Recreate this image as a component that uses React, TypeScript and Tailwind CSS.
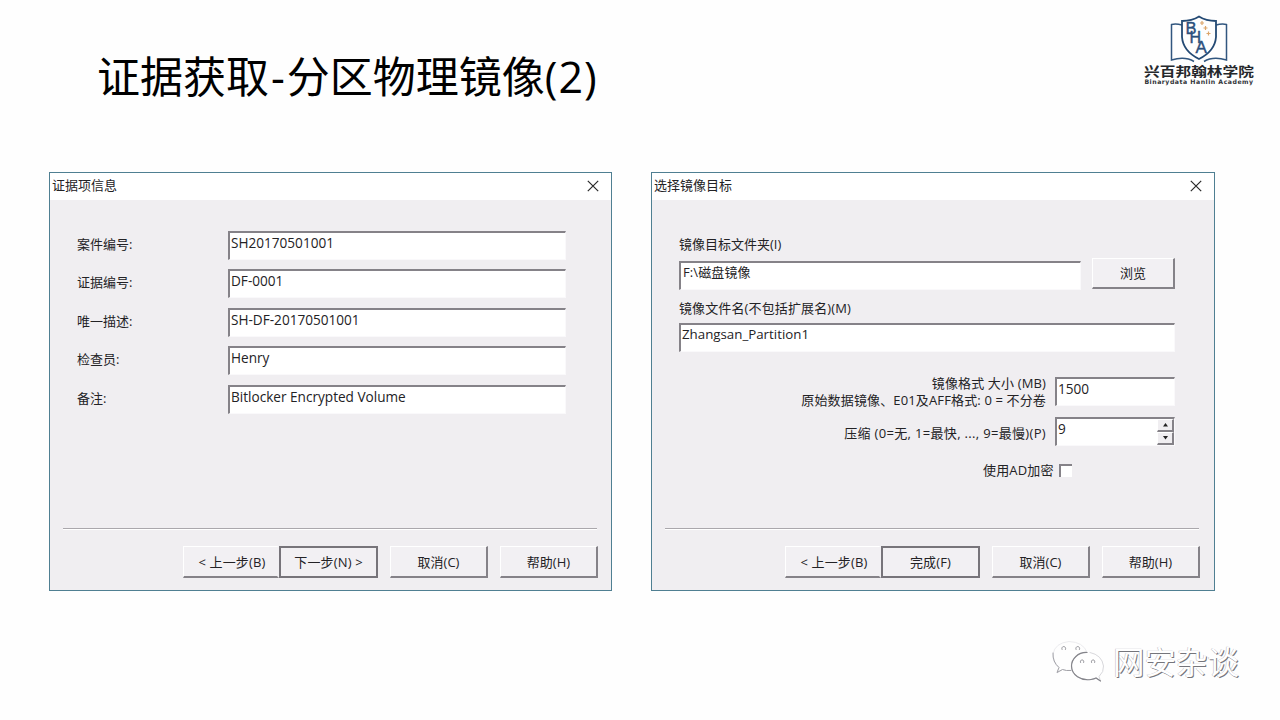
import type { ReactNode } from 'react';

function AcademyLogo() {
  return (
    <div className="flex w-[120px] flex-col items-center">
      <svg width="60" height="50" viewBox="0 0 60 50" fill="none">
        <path d="M13 10 Q7 8.500 2.500 9.500 V45 Q16 41 25 46.500 M47 10 Q53 8.500 57.500 9.500 V45 Q44 41 35 46.500" stroke="#31567f" strokeWidth="1.500" />
        <path d="M30 1.500 Q23 6 13 6 V22 Q14 36 30 44 Q46 36 47 22 V6 Q37 6 30 1.500 Z" stroke="#244a74" strokeWidth="1.800" />
        <g fill="#2b4f7c" fontFamily="Liberation Sans, sans-serif" stroke="#2b4f7c" strokeWidth="0.400">
          <text x="16.500" y="18.500" fontSize="16.500">B</text>
          <text x="20.500" y="27.500" fontSize="16">H</text>
          <text x="26.500" y="37.500" fontSize="17">A</text>
        </g>
        <path d="M33 6v4M31 8h4M36.500 11v4M34.500 13h4M39.500 16.500v4M37.500 18.500h4" stroke="#dca56a" strokeWidth="1.200" />
      </svg>
      <div className="mt-[1px] origin-top scale-y-[0.800] whitespace-nowrap text-[15.700px] leading-[15px] font-bold text-[#25282c]">兴百邦翰林学院</div>
      <div className="mt-[-3px] whitespace-nowrap font-['DejaVu_Sans',sans-serif] text-[6.200px] leading-[8px] font-bold tracking-[0.500px] text-[#303338]">Binarydata Hanlin Academy</div>
    </div>
  );
}

function Dialog({ title, wide, children }: { title: string; wide?: boolean; children: ReactNode }) {
  return (
    <section className={`flex h-[419px] flex-col border border-[#4f7f92] bg-[#f0eef1] ${wide ? 'w-[564px]' : 'w-[563px]'}`}>
      <div className="flex h-[27px] shrink-0 items-start justify-between bg-white pt-[3px] pr-[12px] pl-[2px]">
        <span>{title}</span>
        <svg className="mt-[4px]" width="12" height="12" viewBox="0 0 12 12" stroke="#2a2a2a" strokeWidth="1.200">
          <path d="M0.800 0.800 11.200 11.200M11.200 0.800 0.800 11.200" />
        </svg>
      </div>
      {children}
    </section>
  );
}

function Field({ value, className, children }: { value: string; className: string; children?: ReactNode }) {
  return (
    <div className={`flex h-[29px] shrink-0 justify-between border-t-2 border-r border-b border-l-2 border-t-[#858288] border-r-[#faf9fb] border-b-[#faf9fb] border-l-[#858288] bg-white pl-[1px] ${className}`}>
      <span className="pt-px leading-[17px]">{value}</span>
      {children}
    </div>
  );
}

function Button({ children, primary, className }: { children: ReactNode; primary?: boolean; className: string }) {
  return (
    <button
      className={`flex items-center justify-center whitespace-pre bg-[#f2f0f3] ${
        primary
          ? 'border-2 border-[#77747a]'
          : 'border-t-[1px] border-r-2 border-b-2 border-l-[1px] border-t-white border-r-[#858288] border-b-[#858288] border-l-white'
      } ${className}`}
    >
      {children}
    </button>
  );
}

function Footer({ action }: { action: string }) {
  return (
    <div className="mt-auto px-[13px] pb-[12px]">
      <div className="mb-[16px] h-[2px] w-[534px] border-t border-b border-t-[#aaa7ac] border-b-white" />
      <div className="flex h-[32px] pl-[120px]">
        <div className="flex w-[96px]">
          <Button className="w-[97px] border-r-transparent pl-[3px] tracking-[0.150px]">{'< 上一步(B)'}</Button>
        </div>
        <Button primary className="w-[99px] tracking-[0.150px]">{action}</Button>
        <Button className="ml-[12px] w-[98px]">取消(C)</Button>
        <Button className="ml-[12px] w-[98px]">帮助(H)</Button>
      </div>
    </div>
  );
}

const evidence = [
  ['案件编号:', 'SH20170501001'],
  ['证据编号:', 'DF-0001'],
  ['唯一描述:', 'SH-DF-20170501001'],
  ['检查员:', 'Henry'],
  ['备注:', 'Bitlocker Encrypted Volume'],
];

function EvidenceDialog() {
  return (
    <Dialog title="证据项信息">
      <div className="flex flex-col gap-[9.600px] pt-[30.600px] pl-[27px]">
        {evidence.map(([label, value]) => (
          <div key={label} className="flex items-start">
            <span className="w-[151px] pt-[4px]">{label}</span>
            <Field value={value} className="w-[338px] text-[13.600px]" />
          </div>
        ))}
      </div>
      <Footer action="下一步(N) >" />
    </Dialog>
  );
}

function Spinner() {
  return (
    <div className="flex h-[26px] w-[17px] flex-col">
      {['M0 3.500 2.500 0 5 3.500Z', 'M0 0 2.500 3.500 5 0Z'].map((d) => (
        <div key={d} className="flex flex-1 items-center justify-center border-t border-r-2 border-b-2 border-l border-t-white border-r-[#858288] border-b-[#858288] border-l-white bg-[#f0eef1]">
          <svg width="5" height="4" viewBox="0 0 5 4" fill="#222">
            <path d={d} />
          </svg>
        </div>
      ))}
    </div>
  );
}

function TargetDialog() {
  return (
    <Dialog title="选择镜像目标" wide>
      <div className="flex flex-col pt-[35px] pr-[39px] pl-[27px]">
        <div className="leading-[18px]">镜像目标文件夹(I)</div>
        <div className="mt-[5px] flex items-start justify-between">
          <Field value={'F:\\磁盘镜像'} className="mt-[3px] w-[402px] pl-[2px] tracking-[0.100px]" />
          <Button className="h-[31px] w-[83px]">浏览</Button>
        </div>
        <div className="mt-[9px] leading-[18px] tracking-[0.120px]">镜像文件名(不包括扩展名)(M)</div>
        <Field value="Zhangsan_Partition1" className="mt-[6px] w-[496px] text-[13.300px]" />
        <div className="mt-[25px] flex items-start justify-end gap-[9px]">
          <div className="mt-[-2px] text-right leading-[17px] tracking-[0.140px]">
            <div>镜像格式 大小 (MB)</div>
            <div>原始数据镜像、E01及AFF格式: 0 = 不分卷</div>
          </div>
          <Field value="1500" className="w-[120px] text-[13.600px]" />
        </div>
        <div className="mt-[8px] flex items-start justify-end gap-[9px]">
          <span className="pt-[7px] tracking-[0.330px]">压缩 (0=无, 1=最快, ..., 9=最慢)(P)</span>
          <Field value="9" className="w-[120px] text-[13.600px]">
            <Spinner />
          </Field>
        </div>
        <div className="mt-[15px] flex items-center pl-[304px] leading-[18px] tracking-[0.150px]">
          使用AD加密
          <span className="ml-[5px] size-[13px] border-t-2 border-l-2 border-[#858288] bg-white" />
        </div>
      </div>
      <Footer action="完成(F)" />
    </Dialog>
  );
}

function Watermark() {
  return (
    <div className="flex items-center gap-[8px]">
      <svg width="54" height="46" viewBox="0 0 54 46" fill="none" strokeLinecap="round">
        <path d="M20 31.500Q15 32 11.500 30.500L6 34L8 28.500Q1 23 2 15Q4 4 18 2.500Q32 3 36 13" stroke="#ececef" strokeWidth="1" />
        <path d="M2 14Q1.500 23 8 28.500L6 33.500L11.500 30.500Q15 32 20 31.500" stroke="#a2a2a8" strokeWidth="1" />
        <path d="M36 13.500C27 13 20.500 20 20.500 27C20.500 36 30 42 40 40.500Q43 40 45 39L49.500 42L48 37.500Q53 33 52.500 27Q51 16 39 13.500" fill="white" stroke="#d8d8dc" strokeWidth="1" />
        <path d="M36 13.500C27 13 20.500 20 20.500 27C20.500 36 30 42 40 40.500Q43 40 45 39L49.500 42" stroke="#85858b" strokeWidth="1.200" />
        <g stroke="#96969c" strokeWidth="1">
          <path d="M11 10.500a2 2 0 1 1 3.500 0M25 10.500a2 2 0 1 1 3.500 0M29.500 23.500a1.800 1.800 0 1 1 3.200 0M40.500 23.500a1.800 1.800 0 1 1 3.200 0" />
        </g>
      </svg>
      <span className="whitespace-nowrap text-[31.500px] leading-[40px] text-white [text-shadow:1px_1px_0.500px_#75757b,-0.500px_-0.500px_0.500px_#b8b8be]">网安杂谈</span>
    </div>
  );
}

export default function App() {
  return (
    <main className="flex h-[720px] w-[1280px] flex-col overflow-hidden bg-[#fefefe] font-['Open_Sans','Noto_Sans_CJK_SC',sans-serif] text-[13px] leading-[18px] text-[#232225]">
      <header className="flex h-[172px] shrink-0 items-start justify-between pt-[15px] pr-[21px] pl-[97px]">
        <h1 className="mt-[30px] whitespace-nowrap text-[43px] leading-[64px] font-normal text-black">
          证据获取<span className="px-[2px]">-</span>分区物理镜像<span className="tracking-[0.900px]">(2)</span>
        </h1>
        <AcademyLogo />
      </header>
      <div className="flex gap-[39px] pl-[49px]">
        <EvidenceDialog />
        <TargetDialog />
      </div>
      <footer className="mt-[48px] flex justify-end pr-[41px]">
        <Watermark />
      </footer>
    </main>
  );
}
